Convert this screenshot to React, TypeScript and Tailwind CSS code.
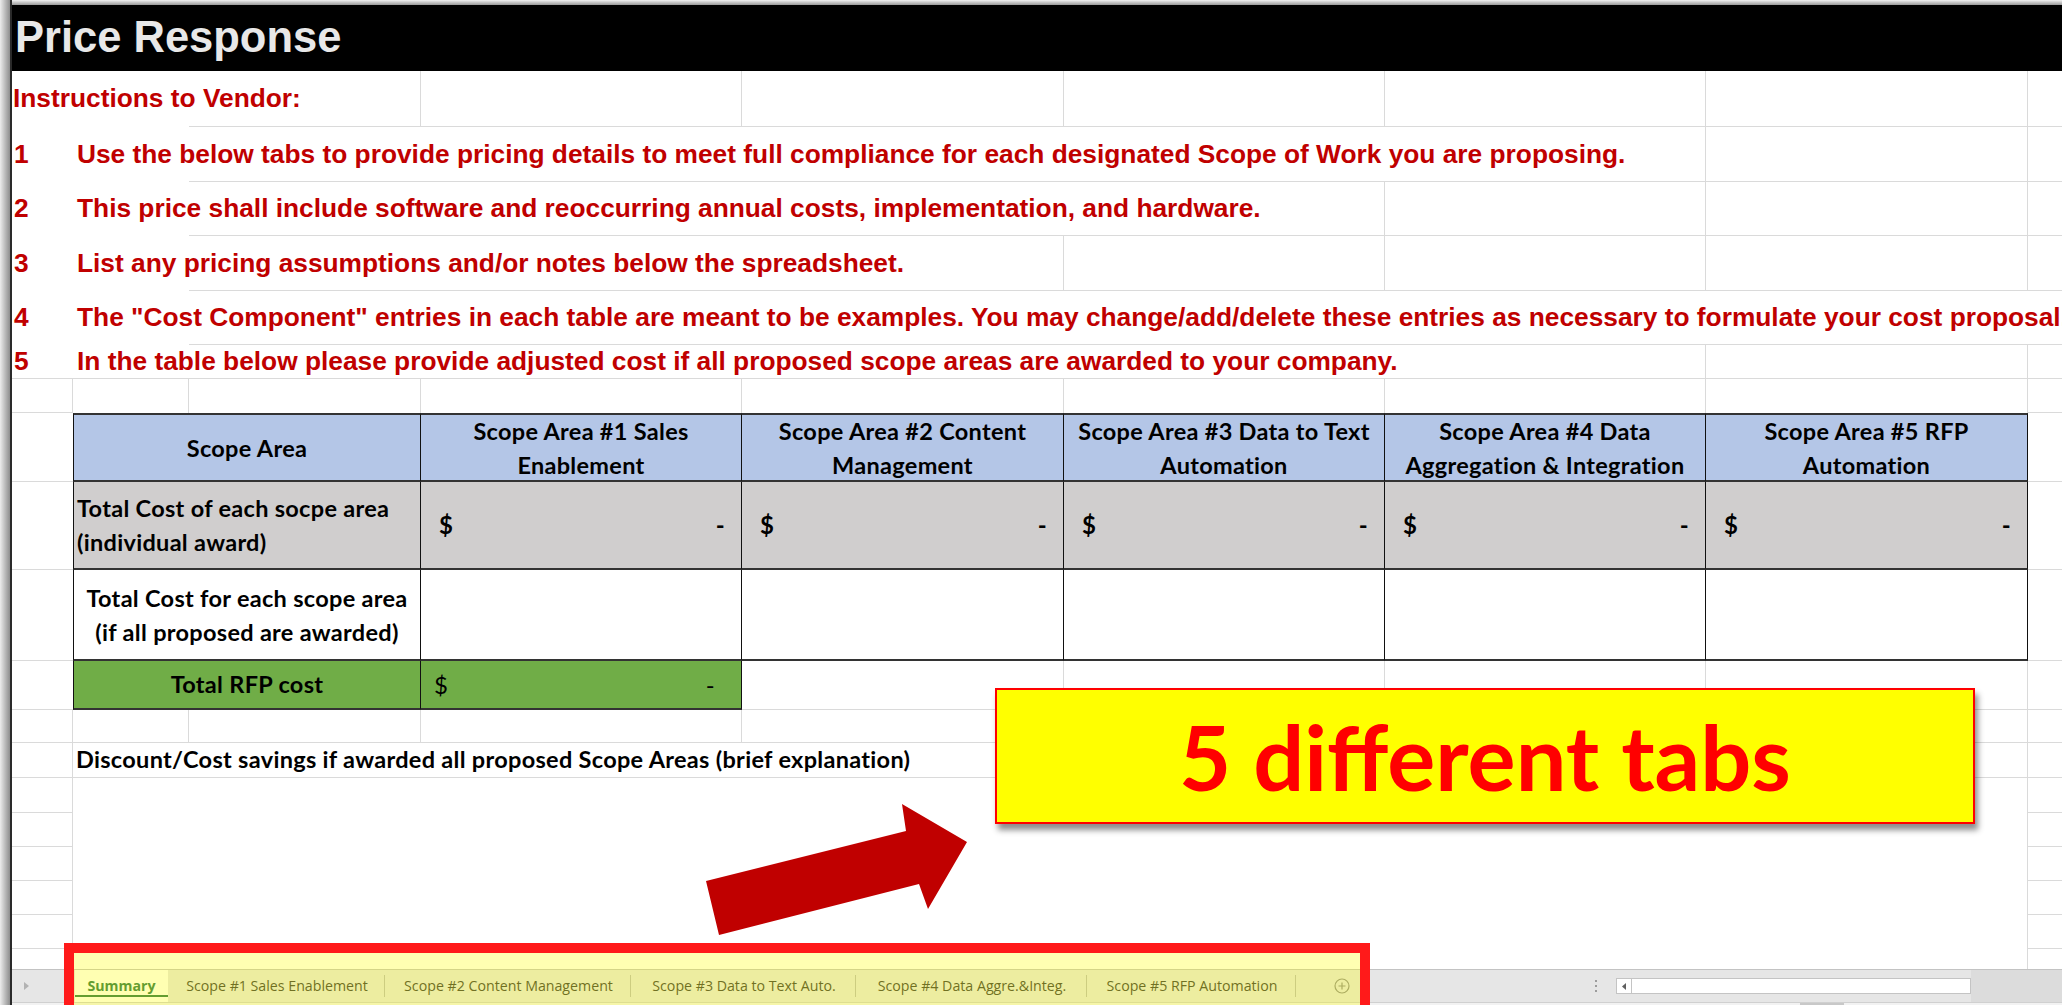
import type { ReactNode } from "react";
import clsx from "clsx";

// sheet columns A..I
const COLS = [
  "w-[61px]",
  "w-[116px]",
  "w-[232px]",
  "w-[321px]",
  "w-[322px]",
  "w-[321px]",
  "w-[321px]",
  "w-[322px]",
  "flex-1",
];

const ARIAL = "font-['Liberation_Sans',Arial,sans-serif]";
const CAL = "font-['Lato',sans-serif]";

const steps = [
  {
    text: "Use the below tabs to provide pricing details to meet full compliance for each designated Scope of Work you are proposing.",
    h: "h-[55px]",
    right: [6, 7],
  },
  {
    text: "This price shall include software and reoccurring annual costs, implementation, and hardware.",
    h: "h-[54px]",
    right: [5, 6, 7],
  },
  {
    text: "List any pricing assumptions and/or notes below the spreadsheet.",
    h: "h-[55px]",
    right: [4, 5, 6, 7],
  },
  {
    text: 'The "Cost Component" entries in each table are meant to be examples. You may change/add/delete these entries as necessary to formulate your cost proposal.',
    h: "h-[54px]",
    right: [],
  },
  {
    text: "In the table below please provide adjusted cost if all proposed scope areas are awarded to your company.",
    h: "h-[34px]",
    right: [6, 7],
  },
];

const heads = [
  ["Scope Area"],
  ["Scope Area #1 Sales", "Enablement"],
  ["Scope Area #2 Content", "Management"],
  ["Scope Area #3 Data to Text", "Automation"],
  ["Scope Area #4 Data", "Aggregation & Integration"],
  ["Scope Area #5 RFP", "Automation"],
];

const TCOLS = ["w-[348px]", "w-[321px]", "w-[322px]", "w-[321px]", "w-[321px]", "w-[322px]"];

const tabs = [
  { label: "Scope #1 Sales Enablement", w: "w-[217px]" },
  { label: "Scope #2 Content Management", w: "w-[246px]" },
  { label: "Scope #3 Data to Text Auto.", w: "w-[225px]" },
  { label: "Scope #4 Data Aggre.&Integ.", w: "w-[231px]" },
  { label: "Scope #5 RFP Automation", w: "w-[209px]" },
];

function SheetRow({
  h,
  right = [],
  bottom = [],
  cells = {},
}: {
  h: string;
  right?: number[];
  bottom?: number[];
  cells?: Record<number, ReactNode>;
}) {
  return (
    <div className={clsx("flex shrink-0", h)}>
      {COLS.map((w, i) => (
        <div
          key={i}
          className={clsx(
            w,
            "flex min-w-0 shrink-0 items-center whitespace-nowrap",
            right.includes(i) && "border-r border-r-[#dadada]",
            bottom.includes(i) && "border-b border-b-[#dadada]"
          )}
        >
          {cells[i]}
        </div>
      ))}
    </div>
  );
}

function TableRow({ h, children }: { h: string; children: ReactNode }) {
  return (
    <div className={clsx("flex shrink-0", h)}>
      <div className="w-[61px] shrink-0 border-b border-b-[#dadada]" />
      {children}
      <div className="flex-1 border-b border-b-[#dadada]" />
    </div>
  );
}

function Dollar({ w }: { w: string }) {
  return (
    <div className={clsx(w, "flex shrink-0 items-center justify-between border-r border-b-2 border-r-[#111] border-b-[#333] bg-[#d0cece] pl-[18px] pr-[16px] text-[24px]")}>
      <span>$</span>
      <span>-</span>
    </div>
  );
}

export default function App() {
  const all = [0, 1, 2, 3, 4, 5, 6, 7, 8];
  const fromC = [2, 3, 4, 5, 6, 7, 8];
  const red = clsx(ARIAL, "text-[26.3px] font-bold text-[#c00000]");

  return (
    <div className="relative flex h-[1005px] w-[2062px] overflow-hidden bg-white text-black">
      {/* window edge */}
      <div className="flex h-full w-[12px] shrink-0">
        <div className="w-[10px] bg-linear-to-r from-[#ededed] to-[#8e8e8e]" />
        <div className="w-[2px] bg-[#2a2a2a]" />
      </div>

      <div className="flex min-w-0 flex-1 flex-col">
        <div className="h-[5px] shrink-0 bg-linear-to-b from-[#f2f2f2] to-[#9a9a9a]" />

        {/* title bar */}
        <div className="flex h-[66px] shrink-0 items-center bg-black pl-[3px]">
          <span className={clsx(ARIAL, "text-[43.5px] font-bold leading-none text-[#e8e8e8]")}>
            Price Response
          </span>
        </div>

        <SheetRow
          h="h-[56px]"
          right={[2, 3, 4, 5, 6, 7]}
          bottom={fromC}
          cells={{ 0: <span className={clsx(red, "pl-[1px]")}>Instructions to Vendor:</span> }}
        />

        {steps.map((s, i) => (
          <SheetRow
            key={i}
            h={s.h}
            right={s.right}
            bottom={i === steps.length - 1 ? all : fromC}
            cells={{
              0: <span className={clsx(red, "pl-[2px]")}>{i + 1}</span>,
              1: <span className={clsx(red, "pl-[4px]")}>{s.text}</span>,
            }}
          />
        ))}

        <SheetRow h="h-[34px]" right={[0, 1, 2, 3, 4, 5, 6, 7]} bottom={[0, 8]} />

        {/* scope area summary table */}
        <div className={clsx(CAL, "flex shrink-0 flex-col font-bold tracking-[0.3px]")}>
          <TableRow h="h-[69px]">
            {heads.map((lines, i) => (
              <div
                key={i}
                className={clsx(
                  TCOLS[i],
                  "flex shrink-0 flex-col items-center justify-center border-t-2 border-r border-b-2 border-r-[#111] border-t-[#333] border-b-[#333] bg-[#b4c6e7] text-center text-[23.5px] leading-[34px]",
                  i === 0 && "border-l border-l-[#111]"
                )}
              >
                {lines.map((l) => (
                  <span key={l}>{l}</span>
                ))}
              </div>
            ))}
          </TableRow>

          <TableRow h="h-[88px]">
            <div className="flex w-[348px] shrink-0 flex-col justify-center border-l border-r border-b-2 border-l-[#111] border-r-[#111] border-b-[#333] bg-[#d0cece] pl-[3px] text-[23.5px] leading-[34px]">
              <span>Total Cost of each socpe area</span>
              <span>(individual award)</span>
            </div>
            {TCOLS.slice(1).map((w, i) => (
              <Dollar key={i} w={w} />
            ))}
          </TableRow>

          <TableRow h="h-[91px]">
            <div className="flex w-[348px] shrink-0 flex-col items-center justify-center border-l border-r border-b-2 border-l-[#111] border-r-[#111] border-b-[#333] text-center text-[23.5px] leading-[34px]">
              <span>Total Cost for each scope area</span>
              <span>(if all proposed are awarded)</span>
            </div>
            {TCOLS.slice(1).map((w, i) => (
              <div key={i} className={clsx(w, "shrink-0 border-r border-b-2 border-r-[#111] border-b-[#333]")} />
            ))}
          </TableRow>

          <TableRow h="h-[49px]">
            <div className="flex w-[348px] shrink-0 items-center justify-center border-l border-r border-b-2 border-l-[#111] border-r-[#111] border-b-[#333] bg-[#70ad47] text-[23.5px]">
              Total RFP cost
            </div>
            <div className="flex w-[321px] shrink-0 items-center justify-between border-r border-b-2 border-r-[#111] border-b-[#333] bg-[#70ad47] pl-[13px] pr-[26px] text-[24px] font-normal">
              <span>$</span>
              <span>-</span>
            </div>
            {["w-[322px]", "w-[321px]", "w-[321px]", "w-[322px]"].map((w, i) => (
              <div key={i} className={clsx(w, "shrink-0 border-r border-b border-r-[#dadada] border-b-[#dadada]")} />
            ))}
          </TableRow>
        </div>

        <SheetRow h="h-[33px]" right={[0, 1, 2, 3, 4, 5, 6, 7]} bottom={all} />

        <SheetRow
          h="h-[35px]"
          right={[0, 4, 5, 6, 7]}
          bottom={all}
          cells={{
            1: (
              <span className={clsx(CAL, "pl-[3px] text-[23.5px] font-bold tracking-[0.3px]")}>
                Discount/Cost savings if awarded all proposed Scope Areas (brief explanation)
              </span>
            ),
          }}
        />

        {/* explanation block, merged across B..H */}
        <div className="flex h-[191px] shrink-0">
          <div className="flex w-[61px] shrink-0 flex-col border-r border-r-[#dadada]">
            {["h-[35px]", "h-[34px]", "h-[34px]", "h-[34px]", "h-[34px]"].map((h, i) => (
              <div key={i} className={clsx(h, "shrink-0 border-b border-b-[#dadada]")} />
            ))}
          </div>
          <div className="w-[1955px] shrink-0 border-r border-r-[#dadada]" />
          <div className="flex flex-1 flex-col">
            {["h-[35px]", "h-[34px]", "h-[34px]", "h-[34px]", "h-[34px]"].map((h, i) => (
              <div key={i} className={clsx(h, "shrink-0 border-b border-b-[#dadada]")} />
            ))}
          </div>
        </div>

        {/* sheet tabs */}
        <div className="flex h-[33px] shrink-0 border-t border-t-[#c3c3c3] bg-[#e6e6e6] font-['Open_Sans',sans-serif] text-[14.2px]">
          <div className="flex w-[63px] shrink-0 items-center pl-[12px]">
            <svg width="5" height="8" viewBox="0 0 5 8">
              <path d="M0 0 L5 4 L0 8 Z" fill="#b2b2b2" />
            </svg>
          </div>
          <div className="relative flex w-[93px] shrink-0 items-center justify-center bg-white font-bold text-[#217346]">
            Summary
            <div className="absolute right-0 bottom-[5px] left-0 h-[2px] bg-[#217346]" />
          </div>
          {tabs.map((t) => (
            <div key={t.label} className={clsx(t.w, "flex shrink-0 items-center justify-center py-[5px]")}>
              <div className="flex h-full w-full items-center justify-center border-r border-r-[#b8b8b8] pl-[2px] text-[#333]">
                {t.label}
              </div>
            </div>
          ))}
          <div className="flex w-[92px] shrink-0 items-center pl-[38px]">
            <svg width="16" height="16" viewBox="0 0 16 16" fill="none" stroke="#8a8a8a" strokeWidth="1.2">
              <circle cx="8" cy="8" r="7" />
              <path d="M8 4.5 V11.5 M4.5 8 H11.5" />
            </svg>
          </div>
          <div className="w-[202px] shrink-0" />
          <div className="flex w-[26px] shrink-0 flex-col items-start justify-center gap-[3px] pl-[5px]">
            <div className="h-[2px] w-[2px] bg-[#9c9c9c]" />
            <div className="h-[2px] w-[2px] bg-[#9c9c9c]" />
            <div className="h-[2px] w-[2px] bg-[#9c9c9c]" />
          </div>
          <div className="mt-[8px] flex h-[16px] w-[355px] shrink-0 border border-[#c4c4c4] bg-white">
            <div className="flex w-[15px] items-center justify-center border-r border-r-[#c4c4c4]">
              <svg width="4" height="7" viewBox="0 0 4 7">
                <path d="M4 0 L0 3.5 L4 7 Z" fill="#606060" />
              </svg>
            </div>
          </div>
          <div className="flex-1 bg-[#dcdcdc]" />
        </div>

        <div className="flex h-[3px] shrink-0 border-t border-t-[#d0d0d0] bg-[#f2f2f2] pl-[1788px]">
          <div className="w-[44px] bg-[#c8c8c8]" />
        </div>
      </div>

      {/* callout */}
      <div className="absolute top-[688px] left-[995px] flex h-[136px] w-[980px] items-center justify-center border-2 border-[#ff0000] bg-[#ffff00] shadow-[3px_6px_6px_rgba(0,0,0,0.45)]">
        <span className={clsx(CAL, "text-[90px] font-bold leading-none text-[#ff0000]")}>5 different tabs</span>
      </div>

      {/* arrow */}
      <svg className="absolute top-[795px] left-[700px]" width="275" height="145" viewBox="700 795 275 145">
        <polygon points="719,935 706,881 906,831 902,804 967,842 928,909 919,884" fill="#c00000" />
      </svg>

      {/* highlight round the tab strip */}
      <div className="absolute top-[943px] left-[64px] h-[72px] w-[1306px] border-[10px] border-[#ff1a1a] bg-[#ffff00]/30" />
    </div>
  );
}
